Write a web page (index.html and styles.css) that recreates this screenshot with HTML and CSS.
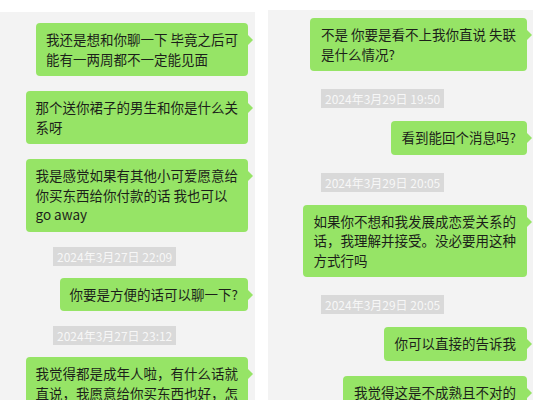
FILE: index.html
```html
<!DOCTYPE html>
<html>
<head lang="zh">
    <meta charset="UTF-8">
    <title>聊天记录</title>
    <link rel="stylesheet" href="styles.css">
</head>
<body>
<div id="page">
    <div class="panel left">
        <div class="msg">我还是想和你聊一下 毕竟之后可<br>能有一两周都不一定能见面</div>
        <div class="msg">那个送你裙子的男生和你是什么关<br>系呀</div>
        <div class="msg">我是感觉如果有其他小可爱愿意给<br>你买东西给你付款的话 我也可以<br>go away</div>
        <div class="time">2024年3月27日 22:09</div>
        <div class="msg">你要是方便的话可以聊一下?</div>
        <div class="time">2024年3月27日 23:12</div>
        <div class="msg">我觉得都是成年人啦，有什么话就<br>直说，我愿意给你买东西也好，怎<br>么样都好</div>
    </div>
    <div class="panel right">
        <div class="msg">不是 你要是看不上我你直说 失联<br>是什么情况?</div>
        <div class="time">2024年3月29日 19:50</div>
        <div class="msg">看到能回个消息吗?</div>
        <div class="time">2024年3月29日 20:05</div>
        <div class="msg">如果你不想和我发展成恋爱关系的<br>话，我理解并接受。没必要用这种<br>方式行吗</div>
        <div class="time">2024年3月29日 20:05</div>
        <div class="msg">你可以直接的告诉我</div>
        <div class="msg">我觉得这是不成熟且不对的</div>
    </div>
</div>
</body>
</html>
```

FILE: styles.css
```css
*{padding: 0;margin: 0;box-sizing: border-box;}
body{background: #fff;height: 400px;overflow: hidden;font: 13.5px "Noto Sans CJK SC", "Microsoft YaHei", sans-serif;color: #1c1f1a;}
#page{display: flex;gap: 13px;}
.panel{display: flex;flex-direction: column;height: 400px;overflow: hidden;background: #f3f3f3;}
.left{width: 255px;margin-top: 12px;padding: 11px 7px 0 0;}
.right{width: 265px;margin-top: 10px;padding: 8px 6px 0 0;}

.msg{position: relative;align-self: flex-end;background: #96e466;border-radius: 4px;padding: 7px 10px;line-height: 19.5px;white-space: nowrap;flex-shrink: 0;}
.msg::after{content: "";position: absolute;right: -5px;top: 12px;border-left: 5px solid #96e466;border-top: 5px solid transparent;border-bottom: 5px solid transparent;}
.right .msg{padding: 7px 11px;}

.time{align-self: flex-start;margin-left: 53px;background: #d9d9d9;color: #f7f7f7;font-size: 12px;line-height: 19px;height: 19px;padding: 0 4px;flex-shrink: 0;}

.msg + .msg{margin-top: 15px;}
.msg + .time{margin-top: 15px;}
.time + .msg{margin-top: 12px;}
.right .msg + .time{margin-top: 18px;}
.right .time + .msg{margin-top: 13px;}
.right .msg + .msg{margin-top: 15px;}
```
